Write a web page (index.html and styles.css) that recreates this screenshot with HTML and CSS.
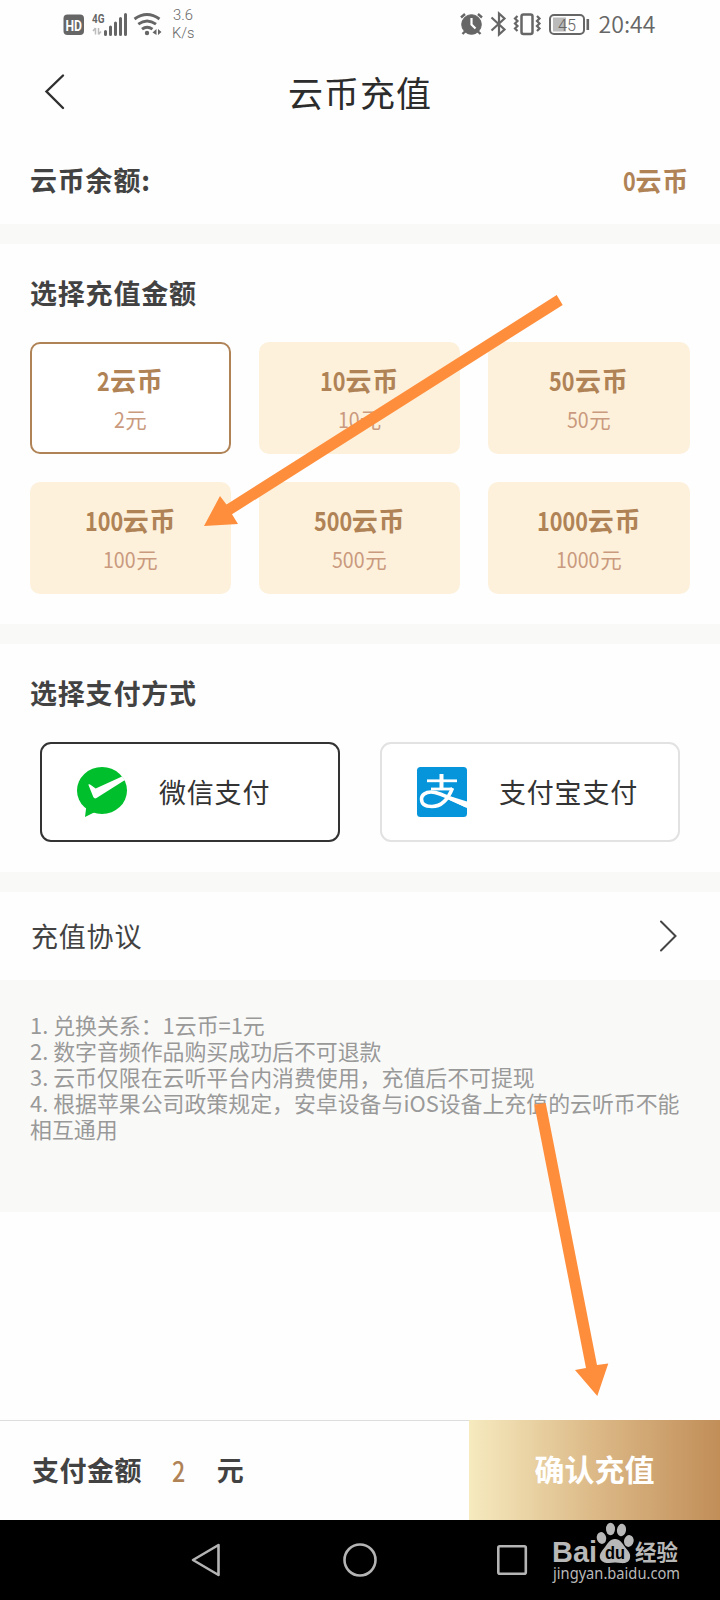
FILE: index.html
```html
<!DOCTYPE html>
<html lang="zh-CN">
<head>
<meta charset="utf-8">
<title>云币充值</title>
<link rel="stylesheet" href="styles.css">
</head>
<body>
<div class="screen">
  <header class="status">
    <svg class="status-left" width="140" height="48" viewBox="60 0 140 48">
      <rect x="63.500" y="14.500" width="20.500" height="20.500" rx="4" fill="#666"/>
      <text class="s-hd" x="65.500" y="30.500" textLength="16.500" lengthAdjust="spacingAndGlyphs">HD</text>
      <text class="s-4g" x="92" y="23" textLength="12.500" lengthAdjust="spacingAndGlyphs">4G</text>
      <path d="M95.500 28v6.500M95.500 28l-2.500 3M98.500 28v6.500M98.500 34.500l2.500-3" fill="none" stroke="#bbb" stroke-width="1.500"/>
      <path d="M105.500 31.500v3M110.500 27v7.500M115.500 23v11.500M120.500 18.500v16M125.500 14.500v20" stroke="#666" stroke-width="3" stroke-linecap="round"/>
      <g fill="none" stroke="#666" stroke-width="2.800"><path d="M134.500 19q12.500-9 25 0M138.300 24.200q8.700-6.500 17.700 0M142 29.200q5-4 10.500 0"/></g>
      <circle cx="147" cy="33" r="2.200" fill="#666"/>
      <path d="M156.500 29v6l-4-2.500zM158 29v6l3.500-3z" fill="#666"/>
      <text class="s-rate" x="173" y="20" textLength="20" lengthAdjust="spacingAndGlyphs">3.6</text>
      <text class="s-rate" x="172" y="38" textLength="22.500" lengthAdjust="spacingAndGlyphs">K/s</text>
    </svg>
    <svg class="status-right" width="202" height="48" viewBox="458 0 202 48">
      <g stroke="#666" fill="none">
        <circle cx="471.500" cy="24.500" r="9.800" fill="#666" stroke-width="1"/>
        <path d="M461 17.500l4-3.500M482 17.500l-4-3.500M462.500 34l3-3M480.500 34l-3-3" stroke-width="2.400"/>
        <path d="M471.500 18v6.500l4 4" stroke="#fff" stroke-width="2.200"/>
        <path d="M491.500 17.500L504.500 29.500l-5.500 5V13.500l5.500 5L491.500 30.500" stroke-width="2.200"/>
        <rect x="521.500" y="14.500" width="11" height="19.500" rx="2" stroke-width="2.500"/>
        <path d="M517.500 16l-2.500 2.500 2.500 2.500-2.500 2.500 2.500 2.500-2.500 2.500 2.500 2.500M537 16l2.500 2.500-2.500 2.500 2.500 2.500-2.500 2.500 2.500 2.500-2.500 2.500" stroke-width="2.200"/>
        <rect x="550" y="15" width="34" height="19" rx="4" stroke-width="2"/>
        <rect x="553" y="17.500" width="13" height="14" fill="#bbb" stroke="none"/>
        <path d="M587.800 19v11" stroke-width="2.600"/>
      </g>
      <text class="s-batt" x="558" y="30.500" textLength="18" lengthAdjust="spacingAndGlyphs">45</text>
      <text class="s-time" x="598.500" y="33" textLength="57" lengthAdjust="spacingAndGlyphs">20:44</text>
    </svg>
  </header>

  <div class="titlebar">
    <svg class="back" width="24" height="40" viewBox="0 0 24 40"><path d="M20 3.500L3.500 19.500 20 36" fill="none" stroke="#303030" stroke-width="2.400" stroke-linecap="round"/></svg>
    <h1 class="title">云币充值</h1>
  </div>

  <section class="balance">
    <span class="heading">云币余额:</span>
    <span class="coins"><span class="num" style="--n:1">0</span>云币</span>
  </section>

  <section class="amounts">
    <h2 class="heading">选择充值金额</h2>
    <div class="grid">
      <div class="card selected"><div class="coins"><span class="num" style="--n:1">2</span>云币</div><div class="price"><span class="num" style="--n:1">2</span>元</div></div>
      <div class="card"><div class="coins"><span class="num" style="--n:2">10</span>云币</div><div class="price"><span class="num" style="--n:2">10</span>元</div></div>
      <div class="card"><div class="coins"><span class="num" style="--n:2">50</span>云币</div><div class="price"><span class="num" style="--n:2">50</span>元</div></div>
      <div class="card"><div class="coins"><span class="num" style="--n:3">100</span>云币</div><div class="price"><span class="num" style="--n:3">100</span>元</div></div>
      <div class="card"><div class="coins"><span class="num" style="--n:3">500</span>云币</div><div class="price"><span class="num" style="--n:3">500</span>元</div></div>
      <div class="card"><div class="coins"><span class="num" style="--n:4">1000</span>云币</div><div class="price"><span class="num" style="--n:4">1000</span>元</div></div>
    </div>
  </section>

  <section class="methods">
    <h2 class="heading">选择支付方式</h2>
    <div class="pay-row">
      <div class="pay active">
        <svg width="52" height="52" viewBox="0 0 52 52"><ellipse cx="26" cy="24.500" rx="25" ry="23.500" fill="#00bf2c"/><path d="M10.500 39L9 51l10-5z" fill="#00bf2c"/><path d="M12.300 18.500q1.200-.8 2.500.5l4.900 3.500L46 10.500 49 14 20.500 32q-2 1.200-3.200-1z" fill="#fff"/></svg>
        <span class="pay-name">微信支付</span>
      </div>
      <div class="pay">
        <svg width="52" height="52" viewBox="0 0 52 52"><rect x="1" y="1" width="50" height="50" rx="3.500" fill="#0695da"/><g fill="none" stroke="#fff"><path d="M11 14.800h30" stroke-width="2.800"/><path d="M25.500 8v15" stroke-width="4"/><path d="M15 23h21" stroke-width="2.800"/><path d="M36.500 22C33 31 27 40.500 16 40.500c-7 0-10.500-3-10.500-7.500 0-4 4-7 9.500-7 8 0 17 5.500 36 14" stroke-width="3.500"/></g><path d="M35 30.500l16 5V42L31 33z" fill="#fff"/></svg>
        <span class="pay-name">支付宝支付</span>
      </div>
    </div>
  </section>

  <section class="agreement">
    <span class="agree-name">充值协议</span>
    <svg width="20" height="34" viewBox="0 0 20 34"><path d="M2 2.500L16.500 17 2 31.500" fill="none" stroke="#444" stroke-width="2" stroke-linecap="round"/></svg>
  </section>

  <section class="notes">
    <p>1. 兑换关系：1云币=1元</p>
    <p>2. 数字音频作品购买成功后不可退款</p>
    <p>3. 云币仅限在云听平台内消费使用，充值后不可提现</p>
    <p>4. 根据苹果公司政策规定，安卓设备与iOS设备上充值的云听币不能<br>相互通用</p>
  </section>

  <div class="spacer"></div>

  <footer class="checkout">
    <div class="total"><span class="heading">支付金额</span><span class="sum"><span class="num" style="--n:1">2</span></span><span class="heading">元</span></div>
    <div class="confirm">确认充值</div>
  </footer>

  <nav class="navbar">
    <svg width="720" height="80" viewBox="0 0 720 80">
      <g fill="none" stroke="#b4b4b4" stroke-width="2.600" stroke-linejoin="round">
        <path d="M193 40l25.500-15v30z"/>
        <circle cx="360" cy="40" r="15.500"/>
        <rect x="498.300" y="26.300" width="27.500" height="27.500" rx="1.500"/>
      </g>
      <g fill="#b8b8b8">
        <text class="w-bai" x="552" y="42" textLength="45" lengthAdjust="spacingAndGlyphs">Bai</text>
        <ellipse cx="601.500" cy="18" rx="4.700" ry="6" transform="rotate(-12 601.500 18)"/>
        <ellipse cx="610.500" cy="9" rx="4.500" ry="6.200"/>
        <ellipse cx="621.500" cy="10" rx="4.500" ry="6.200" transform="rotate(8 621.500 10)"/>
        <ellipse cx="628.800" cy="21" rx="4.800" ry="6" transform="rotate(12 628.800 21)"/>
        <path d="M615 19c5 0 7 4 10 8s6 6 5 11-6 5.500-9 5c-4-.7-8-.7-12 0-3 .5-8-1-9-5s2-7 5-11 5-8 10-8z"/>
        <text class="w-du" x="605" y="38.500" textLength="20" lengthAdjust="spacingAndGlyphs">du</text>
        <text class="w-jy" x="635" y="40" textLength="43" lengthAdjust="spacingAndGlyphs">经验</text>
        <text class="w-url" x="553" y="59" textLength="127" lengthAdjust="spacingAndGlyphs">jingyan.baidu.com</text>
      </g>
    </svg>
  </nav>

  <svg class="arrows" width="720" height="1600" viewBox="0 0 720 1600">
    <path d="M556.700 295L562.700 305 232 514.300 238 524 204 526 220 496 226.500 504.500z"/>
    <path d="M534.300 1104.500L545.700 1103 597 1365 608.300 1363.500 597.300 1396 575 1370 586 1368z"/>
  </svg>
</div>
</body>
</html>
```
FILE: styles.css
```css
* { box-sizing: border-box; margin: 0; padding: 0; }
body {
  background: #fefefe;
  color: #424242;
  font-family: "Noto Sans CJK SC", sans-serif;
}
svg { display: block; flex: none; }
.screen {
  position: relative;
  width: 720px;
  height: 1600px;
  overflow: hidden;
  display: flex;
  flex-direction: column;
}

/* Status bar */
.status {
  height: 48px;
  padding: 0 60px;
  display: flex;
  justify-content: space-between;
}
.status-right { margin-right: 0; }
.status text { fill: #666; font-family: Roboto, sans-serif; }
.status .s-hd { fill: #fff; font-size: 15px; font-weight: 700; }
.s-4g { font-size: 13px; font-weight: 700; }
.s-rate { font-size: 15px; font-weight: 300; }
.s-batt { font-size: 17px; font-weight: 300; }
.status .s-time { font-family: "Noto Sans CJK SC", sans-serif; font-size: 23px; font-weight: 350; }

/* Title */
.titlebar {
  height: 88px;
  display: grid;
  grid-template-columns: 96px 1fr 96px;
  align-items: center;
}
.back { margin-left: 43px; }
.title {
  color: #2c2c2c;
  font-size: 35px;
  letter-spacing: 1px;
  line-height: 52px;
  font-weight: 400;
  text-align: center;
}

.heading { font-size: 27px; letter-spacing: .8px; line-height: 40px; font-weight: 700; }
.coins { color: #b08356; font-size: 26px; letter-spacing: .8px; line-height: 40px; font-weight: 700; }
.num {
  display: inline-block;
  width: calc(var(--n) * .49em);
  letter-spacing: 0;
  white-space: nowrap;
  text-align: left;
  transform: scaleX(.83);
  transform-origin: 0 50%;
}
.balance {
  height: 88px;
  padding: 0 31px 0 30px;
  display: flex;
  align-items: center;
  justify-content: space-between;
}

/* Amount choices */
.amounts {
  height: 400px;
  border-top: 20px solid #f9f9f7;
  padding: 29px 30px 0;
}
.grid {
  margin-top: 29px;
  display: grid;
  grid-template-columns: 201px 201px 202px;
  grid-auto-rows: 112px;
  gap: 28px;
}
.card {
  border-radius: 10px;
  background: #fdf1dc;
  padding-top: 18px;
  text-align: center;
}
.card.selected {
  border: 2px solid #b08356;
  background: #fff;
  padding-top: 16px;
}
.price { color: #ca9a7e; font-size: 21.5px; line-height: 38px; }
.price .num { width: calc(var(--n) * .51em); transform: scaleX(.91); }

/* Payment methods */
.methods {
  height: 248px;
  border-top: 20px solid #f9f9f7;
  padding: 29px 30px 0;
}
.pay-row {
  margin: 29px 10px 0;
  display: grid;
  grid-template-columns: 1fr 1fr;
  gap: 40px;
}
.pay {
  height: 100px;
  border: 2px solid #e2e2e2;
  border-radius: 11px;
  background: #fff;
  padding-left: 34px;
  display: flex;
  align-items: center;
  gap: 31px;
}
.pay.active { border-color: #333; }
.pay-name { color: #333; font-size: 27px; letter-spacing: .8px; line-height: 40px; }

.agreement {
  height: 108px;
  border-top: 20px solid #f9f9f7;
  padding: 0 41px 0 31px;
  display: flex;
  align-items: center;
  justify-content: space-between;
}
.agree-name { font-size: 27px; letter-spacing: .8px; line-height: 40px; }

.notes {
  height: 232px;
  background: #f9f9f8;
  padding: 32px 30px 0;
  color: #999;
  font-size: 21.9px;
  line-height: 26px;
  white-space: nowrap;
}
.spacer { flex: 1; }

/* Checkout bar */
.checkout { height: 100px; display: flex; }
.total {
  width: 469px;
  border-top: 1px solid #ddd;
  padding: 0 0 2px 32px;
  display: flex;
  align-items: center;
}
.total .heading { letter-spacing: .5px; }
.sum {
  color: #b08356;
  font-size: 28px;
  line-height: 40px;
  font-weight: 500;
  margin: 0 31px 0 30px;
}
.confirm {
  flex: 1;
  background: linear-gradient(90deg, #f6eabf, #dcb987 50%, #c18e58);
  color: #fff;
  font-size: 30px;
  line-height: 97px;
  font-weight: 700;
  text-align: center;
}
.navbar { height: 80px; background: #000; }
.w-bai { font: 700 29px "Liberation Sans", sans-serif; }
.w-du { font: 700 19px "Liberation Sans", sans-serif; fill: #000; }
.w-jy { font: 700 22px "Noto Sans CJK SC", sans-serif; }
.w-url { font: 16px "Noto Sans", sans-serif; }

.arrows { position: absolute; inset: 0; fill: #ff8e3c; pointer-events: none; }
```
